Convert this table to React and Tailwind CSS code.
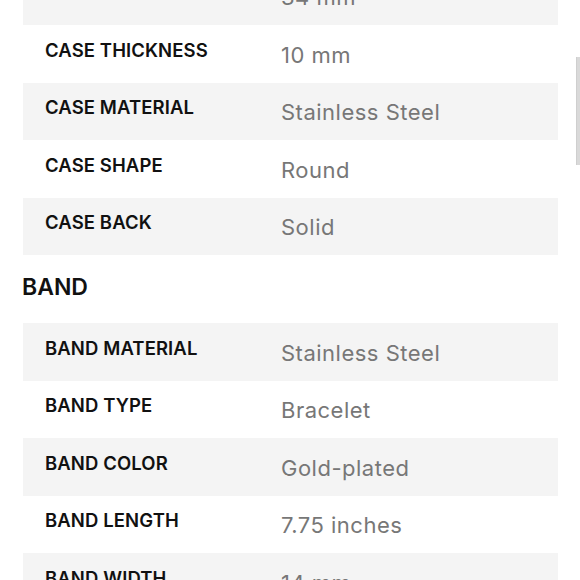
const caseRows = [
  ["CASE DIAMETER", "34 mm"],
  ["CASE THICKNESS", "10 mm"],
  ["CASE MATERIAL", "Stainless Steel"],
  ["CASE SHAPE", "Round"],
  ["CASE BACK", "Solid"],
];

const bandRows = [
  ["BAND MATERIAL", "Stainless Steel"],
  ["BAND TYPE", "Bracelet"],
  ["BAND COLOR", "Gold-plated"],
  ["BAND LENGTH", "7.75 inches"],
  ["BAND WIDTH", "14 mm"],
];

const SpecTable = ({ rows }) => (
  <div className="flex flex-col">
    {rows.map(([label, value], i) => (
      <div
        key={label}
        className={`flex items-center h-[57.5px] pl-[22px] ${i % 2 === 0 ? "bg-[#f4f4f4]" : "bg-white"}`}
      >
        <div className="w-[236px] shrink-0 mb-[6px] text-[18.5px] font-semibold text-[#111] tracking-[0.1px]">
          {label}
        </div>
        <div className="mt-[3px] text-[22px] text-[#777] tracking-[0.5px]">{value}</div>
      </div>
    ))}
  </div>
);

export default function App() {
  return (
    <div
      className="relative w-[580px] h-[580px] overflow-hidden bg-white"
      style={{ fontFamily: "Inter, 'Noto Sans', sans-serif" }}
    >
      <div className="ml-[23px] w-[535px] -mt-[32.5px]">
        <SpecTable rows={caseRows} />
        <div className="h-[68px] flex items-center pb-[4px] -ml-[1px] text-[23px] font-semibold text-[#111]">
          BAND
        </div>
        <SpecTable rows={bandRows} />
      </div>
      <div className="absolute right-0 top-[57px] w-[4px] h-[108px] bg-[#d9d9d9] border-l border-[#cfcfcf]" />
    </div>
  );
}
